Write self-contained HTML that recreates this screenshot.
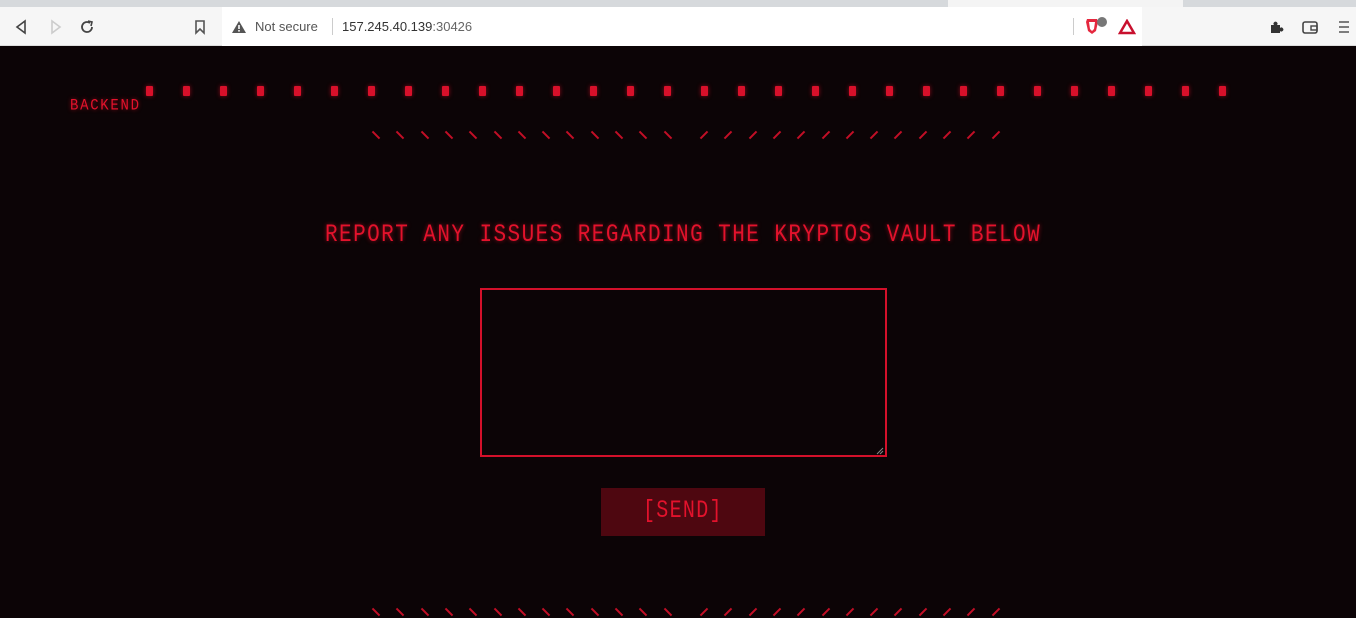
<!DOCTYPE html>
<html><head><style>
*{margin:0;padding:0;box-sizing:border-box}
body{width:1356px;height:618px;overflow:hidden;background:#0c0406;font-family:"Liberation Mono",monospace;position:relative}
.tabbar{position:absolute;left:0;top:0;width:1356px;height:7px;background:#d6d9dc}
.tab{position:absolute;left:948px;top:0;width:235px;height:7px;background:#f4f4f4}
.tool{position:absolute;left:0;top:7px;width:1356px;height:39px;background:#f6f6f6;border-bottom:1px solid #ddd}
.url{position:absolute;left:222px;top:7px;width:920px;height:39px;background:#fff}
.t{position:absolute;font-family:"Liberation Sans",sans-serif;font-size:13px;color:#333;top:19px}
.r{position:absolute;color:#e3122c;text-shadow:0 0 4px rgba(230,20,40,.6)}
.dot{position:absolute;top:86px;width:7px;height:10px;background:#d8102a;border-radius:1px;box-shadow:0 0 5px rgba(220,16,40,.6)}
.sl{position:absolute;width:2px;height:10px;background:#c20f26}
</style></head><body>
<div class="tabbar"></div><div class="tab"></div>
<div class="tool"></div><div class="url"></div>
<svg style="position:absolute;left:14px;top:19px" width="16" height="16"><path d="M11 2 L3 8 L11 14 Z" fill="none" stroke="#444" stroke-width="1.6"/></svg>
<svg style="position:absolute;left:47px;top:19px" width="16" height="16"><path d="M5 2 L13 8 L5 14 Z" fill="none" stroke="#ccc" stroke-width="1.6"/></svg>
<svg style="position:absolute;left:79px;top:19px" width="16" height="16"><path d="M13 8 A5 5 0 1 1 11 4" fill="none" stroke="#444" stroke-width="1.8"/><path d="M9 2 L13 3 L12 7" fill="none" stroke="#444" stroke-width="1.6"/></svg>
<svg style="position:absolute;left:192px;top:19px" width="16" height="16"><path d="M4 2 H12 V14 L8 10 L4 14 Z" fill="none" stroke="#555" stroke-width="1.6"/></svg>
<svg style="position:absolute;left:231px;top:20px" width="16" height="14"><path d="M8 1 L15 13 H1 Z" fill="#555"/><rect x="7.2" y="5" width="1.6" height="4" fill="#fff"/><rect x="7.2" y="10" width="1.6" height="1.6" fill="#fff"/></svg>
<div class="t" style="left:255px;color:#555">Not secure</div>
<div style="position:absolute;left:332px;top:18px;width:1px;height:17px;background:#ccc"></div>
<div class="t" style="left:342px">157.245.40.139<span style="color:#666">:30426</span></div>
<div style="position:absolute;left:1073px;top:18px;width:1px;height:17px;background:#ccc"></div>
<svg style="position:absolute;left:1084px;top:16px" width="28" height="20"><path d="M3 3 H13 L14 6 L12 15 L8 18 L4 15 L2 6 Z" fill="#e5273e"/><path d="M5 6 H11 L10 13 L8 15 L6 13 Z" fill="#fff"/><circle cx="18" cy="6" r="5" fill="#777"/></svg>
<svg style="position:absolute;left:1118px;top:19px" width="18" height="16"><path d="M9 2 L16 14 H2 Z" fill="none" stroke="#c8102e" stroke-width="2.5"/></svg>
<svg style="position:absolute;left:1268px;top:19px" width="16" height="16"><path d="M3 6 H6 A2 2 0 1 1 9 6 H12 V9 A2 2 0 1 1 12 12 V14 H3 Z" fill="#333"/></svg>
<svg style="position:absolute;left:1301px;top:19px" width="18" height="16"><rect x="2" y="3" width="14" height="11" rx="2" fill="none" stroke="#444" stroke-width="1.6"/><rect x="10" y="7" width="6" height="4" fill="none" stroke="#444" stroke-width="1.4"/></svg>
<svg style="position:absolute;left:1338px;top:20px" width="12" height="14"><path d="M1 2 H11 M1 7 H11 M1 12 H11" stroke="#555" stroke-width="1.6"/></svg>

<div class="r" style="left:70px;top:97px;font-size:14px;letter-spacing:1.7px;transform:scaleY(1.15);transform-origin:left top">BACKEND</div>
<div id="dots"></div>
<div class="r" style="left:325px;top:222px;font-size:21px;letter-spacing:1.44px;white-space:nowrap;transform:scaleY(1.2);transform-origin:left top">REPORT ANY ISSUES REGARDING THE KRYPTOS VAULT BELOW</div>
<div style="position:absolute;left:480px;top:288px;width:407px;height:169px;border:2px solid #d4102a;background:#0c0406"></div>
<svg style="position:absolute;left:876px;top:447px" width="8" height="8"><path d="M7 1 L1 7 M7 4 L4 7" stroke="#888" stroke-width="1"/></svg>
<div style="position:absolute;left:601px;top:488px;width:164px;height:48px;background:#4e0710"></div>
<div class="r" style="left:643px;top:497px;font-size:20px;letter-spacing:1.3px;text-shadow:none;transform:scaleY(1.25);transform-origin:left top">[SEND]</div>
<div id="sl"></div>
<script>
var d='';for(var i=0;i<30;i++){d+='<div class="dot" style="left:'+(146+i*37)+'px"></div>'}
document.getElementById('dots').innerHTML=d;
var s='';[130,607].forEach(function(y){for(var i=0;i<13;i++){s+='<div class="sl" style="left:'+(375+i*24.3)+'px;top:'+y+'px;transform:rotate(-45deg)"></div>';s+='<div class="sl" style="left:'+(703+i*24.3)+'px;top:'+y+'px;transform:rotate(45deg)"></div>'}});
document.getElementById('sl').innerHTML=s;
</script>
</body></html>
